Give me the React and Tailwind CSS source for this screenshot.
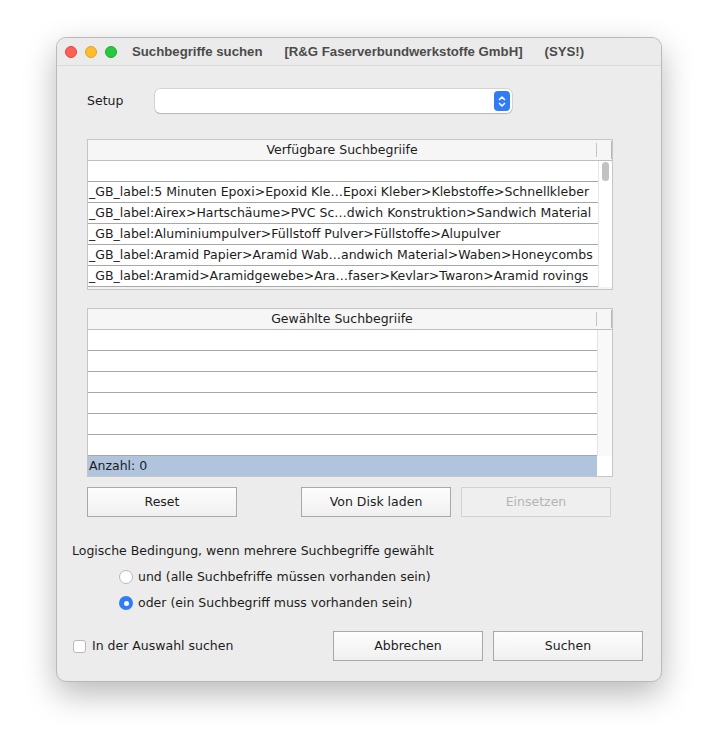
import React from 'react'

const font = { fontFamily: '"DejaVu Sans", "Noto Sans", sans-serif' }

const available = [
  '',
  '_GB_label:5 Minuten Epoxi>Epoxid Kle…Epoxi Kleber>Klebstoffe>Schnellkleber',
  '_GB_label:Airex>Hartschäume>PVC Sc…dwich Konstruktion>Sandwich Material',
  '_GB_label:Aluminiumpulver>Füllstoff Pulver>Füllstoffe>Alupulver',
  '_GB_label:Aramid Papier>Aramid Wab…andwich Material>Waben>Honeycombs',
  '_GB_label:Aramid>Aramidgewebe>Ara…faser>Kevlar>Twaron>Aramid rovings',
]

function Button({ children, disabled, className = '' }) {
  return (
    <button
      className={`h-[30px] w-[150px] border text-[12.5px] ${
        disabled
          ? 'border-[#d2d2d2] bg-[#efefef] text-[#b4b4b4]'
          : 'border-[#a9a9a9] bg-gradient-to-b from-[#fdfdfd] to-[#f0f0f0] text-[#1c1c1c]'
      } ${className}`}
    >
      {children}
    </button>
  )
}

function Header({ title }) {
  return (
    <div className="flex h-[21px] border-b border-[#bdbdbd] bg-[#f6f6f6]">
      <div className="flex flex-1 items-center justify-center text-[12.5px] text-[#1c1c1c]">{title}</div>
      <div className="my-[3px] w-px bg-[#c4c4c4]" />
      <div className="w-[14px]" />
      <div className="my-[1px] w-px bg-[#b8b8b8]" />
    </div>
  )
}

function Radio({ checked, children }) {
  return (
    <div className="flex h-[26px] items-center gap-[5px]">
      {checked ? (
        <span className="flex h-[14px] w-[14px] items-center justify-center rounded-full bg-[#2f7cf6]">
          <span className="h-[5px] w-[5px] rounded-full bg-white" />
        </span>
      ) : (
        <span className="h-[14px] w-[14px] rounded-full border border-[#b9b9b9] bg-white" />
      )}
      <span className="text-[12.5px] text-[#1c1c1c]">{children}</span>
    </div>
  )
}

export default function App() {
  return (
    <div className="min-h-[755px] bg-white pl-[56px] pt-[37px]" style={font}>
      <div className="w-[606px] overflow-hidden rounded-[10px] border border-[#b9b9b9] bg-[#ececec] shadow-[0_12px_32px_rgba(0,0,0,0.28)]">
        {/* title bar */}
        <div className="flex h-[28px] items-center border-b border-[#d9d9d9] bg-[#ebebeb] pl-[8px]">
          <span className="h-[12px] w-[12px] rounded-full bg-[#fe5f57] border border-[#e0443e]" />
          <span className="ml-[8px] h-[12px] w-[12px] rounded-full bg-[#febc2e] border border-[#dea123]" />
          <span className="ml-[8px] h-[12px] w-[12px] rounded-full bg-[#28c840] border border-[#1aab29]" />
          <span
            className="ml-[15px] whitespace-pre text-[13.2px] font-bold text-[#4b4b4b]"
            style={{ fontFamily: '"Liberation Sans", Arial, sans-serif' }}
          >
            {'Suchbegriffe suchen      [R&G Faserverbundwerkstoffe GmbH]      (SYS!)'}
          </span>
        </div>

        <div className="pl-[30px] pb-[20px]">
          {/* setup */}
          <div className="mt-[23px] flex h-[24px] items-center">
            <span className="w-[68px] text-[12.5px] text-[#1c1c1c]">Setup</span>
            <div className="flex h-[24px] w-[357px] items-center justify-end rounded-[5px] bg-white pr-[2px] shadow-[0_0_0_0.5px_rgba(0,0,0,0.2),0_1px_1px_rgba(0,0,0,0.15)]">
              <span className="flex h-[20px] w-[16px] items-center justify-center rounded-[4px] bg-[#2f7cf6]">
                <svg width="8" height="13" viewBox="0 0 8 13" fill="none" stroke="white" strokeWidth="1.6" strokeLinecap="round" strokeLinejoin="round">
                  <path d="M1.5 4.5 L4 2 L6.5 4.5" />
                  <path d="M1.5 8.5 L4 11 L6.5 8.5" />
                </svg>
              </span>
            </div>
          </div>

          {/* available */}
          <div className="mt-[26px] w-[526px] border border-[#c6c6c6] bg-[#f3f3f3]">
            <Header title="Verfügbare Suchbegriife" />
            <div className="flex">
              <div className="w-[510px] bg-white">
                {available.map((t, i) => (
                  <div key={i} className="h-[21px] overflow-hidden whitespace-nowrap border-b border-[#a8a8a8] pl-[1px] text-[12.5px] leading-[20px] text-[#1c1c1c]">
                    {t}
                  </div>
                ))}
              </div>
              <div className="w-[14px] border-l border-[#e6e6e6] bg-white pl-[3px] pt-[1px]">
                <div className="h-[19px] w-[7px] rounded-full bg-[#c2c2c2]" />
              </div>
            </div>
            <div className="h-[2px]" />
          </div>

          {/* selected */}
          <div className="mt-[18px] w-[526px] border border-[#c6c6c6] bg-white">
            <Header title="Gewählte Suchbegriife" />
            <div className="flex">
              <div className="w-[509px]">
                {[0, 1, 2, 3, 4, 5].map((i) => (
                  <div key={i} className="h-[21px] border-b border-[#a8a8a8]" />
                ))}
                <div className="h-[20px] bg-[#b0c4de] pl-[1px] text-[12.5px] leading-[20px] text-[#1c1c1c]">Anzahl: 0</div>
              </div>
              <div className="flex w-[15px] flex-col">
                <div className="h-[126px] border-l border-[#e3e3e3] bg-[#f9f9f9]" />
                <div className="h-[20px] bg-white" />
              </div>
            </div>
          </div>

          {/* buttons */}
          <div className="mt-[10px] flex w-[526px]">
            <Button>Reset</Button>
            <Button className="ml-[64px]">Von Disk laden</Button>
            <Button disabled className="ml-[10px]">Einsetzen</Button>
          </div>

          {/* condition */}
          <div className="-ml-[15px] mt-[26px] text-[12.5px] leading-[16px] text-[#1c1c1c]">
            Logische Bedingung, wenn mehrere Suchbegriffe gewählt
          </div>
          <div className="ml-[32px] mt-[5px]">
            <Radio>und (alle Suchbefriffe müssen vorhanden sein)</Radio>
            <Radio checked>oder (ein Suchbegriff muss vorhanden sein)</Radio>
          </div>

          {/* bottom */}
          <div className="-ml-[14px] mt-[15px] flex h-[30px] items-center">
            <span className="h-[13px] w-[13px] rounded-[3px] border border-[#b9b9b9] bg-white" />
            <span className="ml-[6px] w-[241px] text-[12.5px] text-[#1c1c1c]">In der Auswahl suchen</span>
            <Button>Abbrechen</Button>
            <Button className="ml-[10px]">Suchen</Button>
          </div>
        </div>
      </div>
    </div>
  )
}
